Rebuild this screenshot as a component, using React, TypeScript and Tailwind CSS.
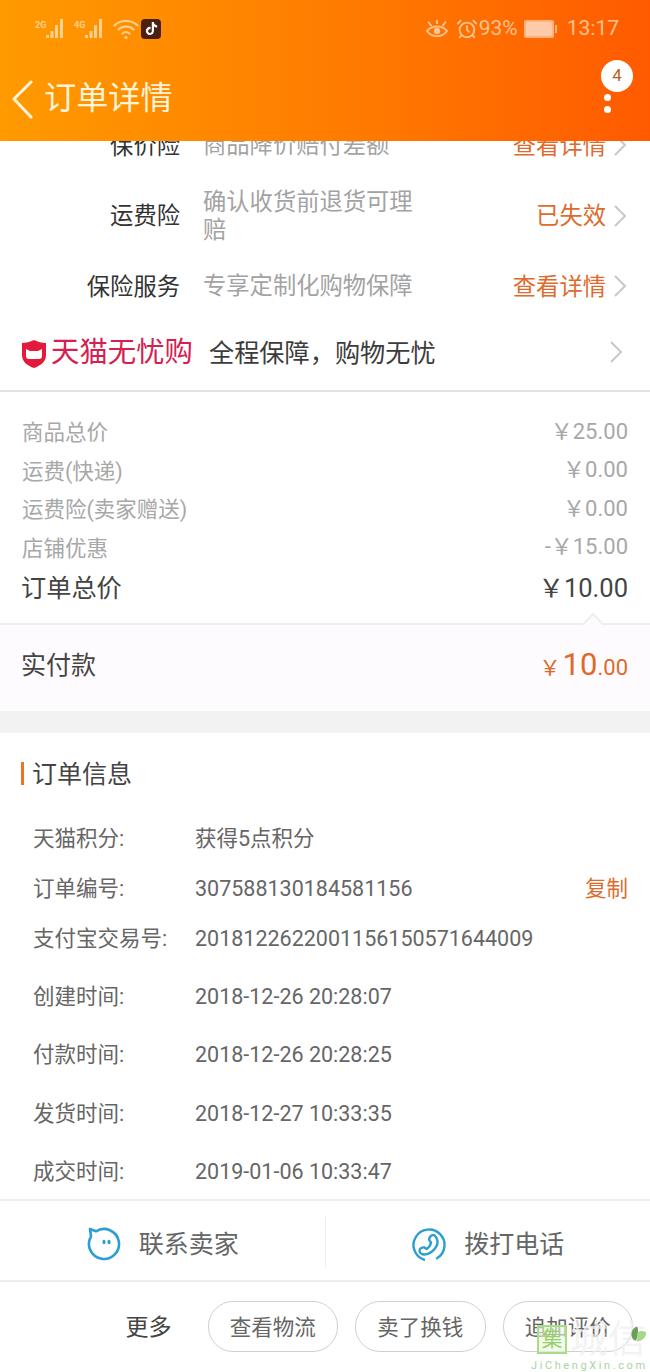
import { AlarmClock } from 'lucide-react';
import { SiTiktok } from 'react-icons/si';

const FONT = 'font-["Roboto","Noto_Sans_CJK_SC",sans-serif]';

function SignalIcon({ tag }: { tag: string }) {
  return (
    <div className="relative h-[24px] w-[31px]">
      <span className="absolute left-0 top-[3px] text-[9px] font-bold leading-[10px] text-[#ffd08f]">{tag}</span>
      <svg viewBox="0 0 31 24" className="h-[24px] w-[31px]" fill="#ffd08f">
        <rect x="11" y="18" width="3" height="3" />
        <rect x="15.5" y="14" width="3" height="7" />
        <rect x="20" y="8" width="3" height="13" />
        <rect x="25" y="2" width="3" height="19" />
      </svg>
    </div>
  );
}

function WifiIcon() {
  return (
    <svg viewBox="0 0 26 22" className="h-[22px] w-[26px]" fill="none" stroke="#ffd08f" strokeWidth="2.2" strokeLinecap="round">
      <path d="M1.5 7.5c6-6 17-6 23 0" />
      <path d="M5.5 11.5c4-4 11-4 15 0" />
      <path d="M9.5 15.5c2-2 5-2 7 0" />
      <circle cx="13" cy="19.5" r="1.6" fill="#ffd08f" stroke="none" />
    </svg>
  );
}

function EyeIcon() {
  return (
    <svg viewBox="0 0 24 20" className="h-[20px] w-[24px]" fill="none" stroke="#ffc38f" strokeWidth="2">
      <path d="M2 12c5-6 15-6 20 0-5 7-15 7-20 0z" />
      <circle cx="12" cy="12" r="3.2" fill="#ffc38f" stroke="none" />
      <path d="M3 2.5l3.5 4.5M21 2.5L17.5 7M12 1v4" />
    </svg>
  );
}

function StatusBar() {
  return (
    <div className="flex h-[56px] items-center justify-between pl-[35px] pr-[31px] pt-[1px]">
      <div className="flex items-center">
        <SignalIcon tag="2G" />
        <div className="ml-[8px]">
          <SignalIcon tag="4G" />
        </div>
        <div className="ml-[8px]">
          <WifiIcon />
        </div>
        <div className="ml-[2px] flex h-[20px] w-[20px] items-center justify-center rounded-[4px] bg-[#4a2010]">
          <SiTiktok className="h-[13px] w-[13px] text-white" />
        </div>
      </div>
      <div className="flex items-center text-[21px] text-[#ffc38f]">
        <EyeIcon />
        <AlarmClock className="ml-[7px] h-[22px] w-[22px]" strokeWidth={2} />
        <span className="ml-[1px]">93%</span>
        <div className="ml-[6px] flex items-center">
          <div className="h-[18px] w-[30px] rounded-[2px] border-2 border-[#ffb27e] bg-[#ffcaa8]" />
          <div className="ml-[1px] h-[8px] w-[2px] bg-[#ffb27e]" />
        </div>
        <span className="ml-[10px]">13:17</span>
      </div>
    </div>
  );
}

function Header() {
  return (
    <div className="relative z-10 h-[141px] shrink-0 bg-gradient-to-r from-[#ff9a00] via-[#ff7d00] to-[#ff5a00]">
      <StatusBar />
      <div className="flex h-[85px] items-center pl-[10px] pr-[17px]">
        <svg viewBox="0 0 24 40" className="mt-[1px] h-[40px] w-[24px]" fill="none" stroke="#fff3d8" strokeWidth="3" strokeLinecap="round" strokeLinejoin="round">
          <path d="M21 3L4 20l17 18" />
        </svg>
        <span className="ml-[10px] text-[32.2px] leading-none text-[#fff3d8]">订单详情</span>
        <div className="relative ml-auto mr-[22px] flex flex-col gap-[5px] pt-[10px]">
          <span className="h-[7px] w-[7px] rounded-full bg-white" />
          <span className="h-[7px] w-[7px] rounded-full bg-white" />
          <span className="absolute -left-[3px] -top-[24px] flex h-[32px] w-[32px] items-center justify-center rounded-full bg-white text-[17px] text-[#b5651d]">
            4
          </span>
        </div>
      </div>
    </div>
  );
}

function Chevron() {
  return (
    <svg viewBox="0 0 14 24" className="h-[24px] w-[14px]" fill="none" stroke="#c8c8c8" strokeWidth="2">
      <path d="M2 2l10 10L2 22" />
    </svg>
  );
}

function ServiceRow({ label, desc, action, height }: { label: string; desc: string; action: string; height: string }) {
  return (
    <div className={`flex items-center pr-[23px] ${height}`}>
      <div className="w-[180px] pt-[2px] text-right text-[23.3px] text-[#333333]">{label}</div>
      <div className="ml-[23px] w-[214px] text-[23.3px] leading-[28px] text-[#a3a3a3]">{desc}</div>
      <div className="ml-auto flex items-center gap-[7px] text-[23.3px] text-[#de6b2e]">
        <span className="pt-[2px]">{action}</span>
        <Chevron />
      </div>
    </div>
  );
}

function FeeRow({ label, value }: { label: string; value: string }) {
  return (
    <div className="flex h-[38.5px] items-center justify-between px-[22px] text-[#a8a8a8]">
      <span className="pt-[2px] text-[21.5px]">{label}</span>
      <span className="pb-[2px] text-[22px]">{value}</span>
    </div>
  );
}

function InfoRow({ label, value, rowClass, copy }: { label: string; value: string; rowClass: string; copy?: boolean }) {
  return (
    <div className={`flex items-center pl-[33px] pr-[22px] text-[21.5px] text-[#666666] ${rowClass}`}>
      <span className="w-[162px]">{label}</span>
      <span>{value}</span>
      {copy && <span className="ml-auto text-[#de6b2e]">复制</span>}
    </div>
  );
}

function ChatFaceIcon() {
  return (
    <svg viewBox="0 0 34 36" className="h-[36px] w-[34px]" fill="none" stroke="#2b9fd0" strokeWidth="2.6" strokeLinejoin="round">
      <path d="M3 2l6 2.3A15 15 0 1 1 4 9.500z" />
      <ellipse cx="17" cy="15" rx="1.6" ry="2.3" fill="#2b9fd0" stroke="none" />
      <ellipse cx="22" cy="15" rx="1.6" ry="2.3" fill="#2b9fd0" stroke="none" />
    </svg>
  );
}

function PhoneIcon() {
  return (
    <svg viewBox="0 0 34 36" className="h-[36px] w-[34px]" fill="none" stroke="#2b9fd0" strokeWidth="2.4" strokeLinecap="round" strokeLinejoin="round">
      <path d="M12 32.7A15.5 15.5 0 1 1 25 31.3" />
      <path d="M21 8c2 0 4 3 4.500 6 .5 6-6 13-13 13.500-3 0-5-2-5-4 0-2 3-3.500 5-3l2 1.500c2-1 4-4 4.500-6.500l-1.500-2c-1-2 1-5.500 3.500-5.500z" />
    </svg>
  );
}

function ActionButton({ label }: { label: string }) {
  return (
    <div className="flex h-[51px] w-[130.5px] items-center justify-center rounded-[25px] border border-[#d0d0d0] pt-[2px] text-[21.5px] text-[#666666]">
      {label}
    </div>
  );
}

function Watermark() {
  return (
    <div className="absolute bottom-0 right-0 h-[52px] w-[119px]">
      <div className="absolute left-[6px] top-[5px] flex h-[29px] w-[30px] items-center justify-center border-2 border-[#a9dc86] bg-[#e9f6dc]/60 text-[21px] leading-none text-[#95d06c]">
        集
      </div>
      <span className="absolute left-[39px] top-[-2px] whitespace-nowrap text-[38px] leading-[42px] text-[#f0f0f0]/80">城信</span>
      <svg viewBox="0 0 22 22" className="absolute right-[3px] top-[5px] h-[20px] w-[18px]">
        <path d="M3 10C3 4 8 1 10 1c2 3 1 14-2 17-3-1-5-4-5-8z" fill="#6a9f58" />
        <path d="M10 9c3-4 8-3 11-1 0 6-5 11-12 11 2-3 1-7 1-10z" fill="#a5d88a" />
      </svg>
      <span className="absolute left-[0px] top-[40px] whitespace-nowrap text-[11px] leading-[12px] tracking-[2.6px] text-[#a9d4a4]">
        JiChengXin.com
      </span>
    </div>
  );
}

export default function App() {
  return (
    <div className={`relative flex h-[1372px] w-[650px] flex-col overflow-hidden bg-white ${FONT}`}>
      <Header />
      <div className="-mt-[31px] flex flex-col">
        <ServiceRow height="h-[70px]" label="保价险" desc="商品降价赔付差额" action="查看详情" />
        <ServiceRow height="h-[71px]" label="运费险" desc="确认收货前退货可理赔" action="已失效" />
        <ServiceRow height="h-[70px]" label="保险服务" desc="专享定制化购物保障" action="查看详情" />
        <div className="flex h-[71px] items-center border-b-2 border-[#e2e2e2] pb-[4px] pl-[21px] pr-[27px]">
          <svg viewBox="0 0 26 30" className="h-[30px] w-[26px]">
            <path d="M13 1c4 2 8 3 12 3v12c0 7-6 11-12 13C7 27 1 23 1 16V4c4 0 8-1 12-3z" fill="#e21a3c" />
            <path d="M5 10l4 2h8l4-2v7a3 3 0 0 1-3 3H8a3 3 0 0 1-3-3z" fill="#fff" />
          </svg>
          <span className="ml-[4px] text-[28.4px] leading-none text-[#d62050]">天猫无忧购</span>
          <span className="ml-[16px] text-[25.2px] text-[#3c3c3c]">全程保障，购物无忧</span>
          <div className="ml-auto -mt-[3px]">
            <Chevron />
          </div>
        </div>

        <div className="pt-[21px]">
          <FeeRow label="商品总价" value="￥25.00" />
          <FeeRow label="运费(快递)" value="￥0.00" />
          <FeeRow label="运费险(卖家赠送)" value="￥0.00" />
          <FeeRow label="店铺优惠" value="-￥15.00" />
          <div className="flex h-[42px] items-center justify-between pl-[21px] pr-[22px] text-[#444444]">
            <span className="pt-[2px] text-[25.2px]">订单总价</span>
            <span className="text-[25.5px]">￥10.00</span>
          </div>
        </div>

        <div className="relative mt-[14px] h-[88px] border-t-2 border-[#eeeeee] bg-[#fdfbfe]">
          <div className="absolute -top-[9px] left-[585px] h-[16px] w-[16px] rotate-45 border-l-2 border-t-2 border-[#eeeeee] bg-[#fdfbfe]" />
          <div className="flex h-full items-center justify-between pb-[5px] pl-[21px] pr-[22px]">
            <span className="text-[25px] text-[#444444]">实付款</span>
            <span className="flex items-baseline text-[#dd6a2a]">
              <span className="mr-[2px] text-[21px]">￥</span>
              <span className="text-[31px]">10</span>
              <span className="text-[22px]">.00</span>
            </span>
          </div>
        </div>
        <div className="h-[22px] bg-[#f2f2f2]" />

        <div className="flex h-[80px] items-center pl-[21px]">
          <span className="h-[23px] w-[3px] bg-[#f0722a]" />
          <span className="ml-[8px] pt-[4px] text-[25px] text-[#444444]">订单信息</span>
        </div>
        <InfoRow rowClass="h-[50px] pt-[2px]" label="天猫积分:" value="获得5点积分" />
        <InfoRow rowClass="h-[50px] pt-[2px]" label="订单编号:" value="307588130184581156" copy />
        <InfoRow rowClass="h-[50px] pt-[2px]" label="支付宝交易号:" value="2018122622001156150571644009" />
        <div className="h-[3px]" />
        <InfoRow rowClass="h-[58.3px] pt-[4px]" label="创建时间:" value="2018-12-26 20:28:07" />
        <InfoRow rowClass="h-[58.3px] pt-[4px]" label="付款时间:" value="2018-12-26 20:28:25" />
        <InfoRow rowClass="h-[58.3px] pt-[4px]" label="发货时间:" value="2018-12-27 10:33:35" />
        <InfoRow rowClass="h-[58.3px] pt-[4px]" label="成交时间:" value="2019-01-06 10:33:47" />

        <div className="flex h-[83px] items-center border-y-2 border-[#ededed] pt-[8px] text-[25px] text-[#666666]">
          <div className="flex flex-1 items-center justify-center gap-[18px] pl-[1px]">
            <ChatFaceIcon />
            <span>联系卖家</span>
          </div>
          <div className="-mt-[6px] h-[50px] w-px bg-[#eeeeee]" />
          <div className="flex flex-1 items-center justify-center gap-[18px] pl-[1px]">
            <PhoneIcon />
            <span>拨打电话</span>
          </div>
        </div>

        <div className="flex h-[91px] items-center justify-end gap-[17px] pb-[2px] pr-[17px]">
          <span className="mr-[19px] pt-[4px] text-[23px] text-[#444444]">更多</span>
          <ActionButton label="查看物流" />
          <ActionButton label="卖了换钱" />
          <ActionButton label="追加评价" />
        </div>
      </div>
      <Watermark />
    </div>
  );
}
